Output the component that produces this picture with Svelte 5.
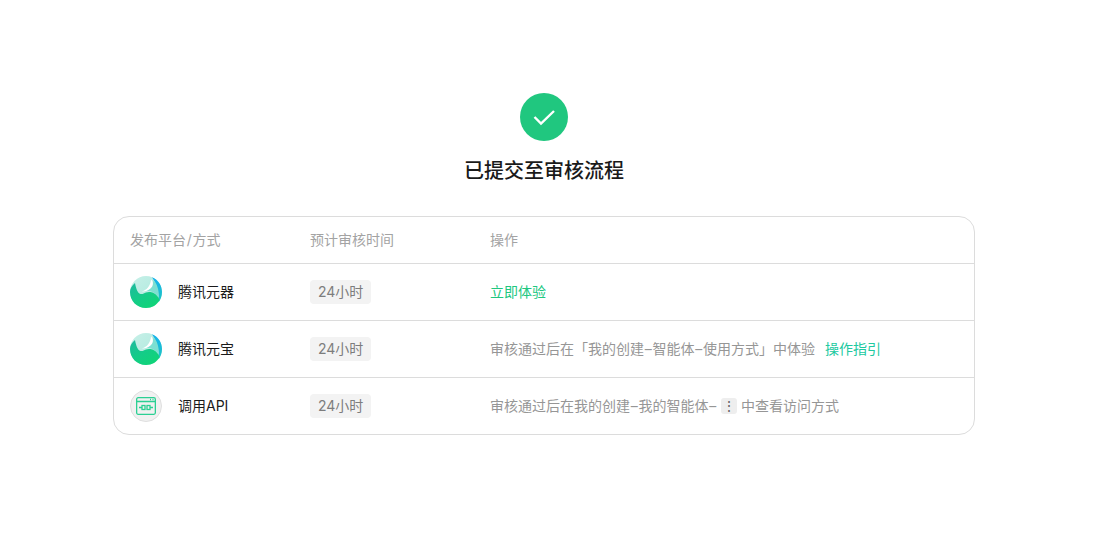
<script>
    const rows = [
        { icon: "yuan", name: "腾讯元器" },
        { icon: "yuan", name: "腾讯元宝" },
        { icon: "api", name: "调用API" }
    ]
</script>

{#snippet yuanIcon(id)}
    <svg class="logo" viewBox="0 0 32 32">
        <defs>
            <linearGradient id="bg{id}" x1="0" y1="0" x2="1" y2="1">
                <stop offset="0" stop-color="#c8f0e8" />
                <stop offset="1" stop-color="#a8e8dc" />
            </linearGradient>
            <linearGradient id="gr{id}" x1="0" y1="0" x2="0.7" y2="1">
                <stop offset="0" stop-color="#1fb8a0" />
                <stop offset="0.55" stop-color="#14cc88" />
                <stop offset="1" stop-color="#10d478" />
            </linearGradient>
            <linearGradient id="bl{id}" x1="0" y1="0" x2="0" y2="1">
                <stop offset="0" stop-color="#16b2f0" />
                <stop offset="1" stop-color="#1fc6c0" />
            </linearGradient>
        </defs>
        <circle cx="16" cy="16" r="16" fill="url(#bg{id})" />
        <path d="M22 1.200C28 3.500 32 9.500 32 16c0 4-1.500 8-3.500 10.500C29 17 27 8 22 1.200z" fill="url(#bl{id})" />
        <path d="M12 15.500C18 15 23 10 23.500 4c3.500 4 5.500 9 5.500 18-3-5-9-9-17-6.500z" fill="#7ddfd2" />
        <path d="M5 7C1.500 10 0 13 0 16c0 9 7 16 16 16 6 0 11-3 13.500-8-1-3-3-5.500-6-7-2-1-5-1.500-7.500-.5-2 .8-3.500 2-5.500 1.500C7.500 17.500 6 12 5 7z" fill="url(#gr{id})" />
        <path d="M12 15.500C17 14 20.500 9.500 21 3.500c2.800 2.500 2.500 6.500-.5 9-2.500 2-5.500 3.300-8.500 3z" fill="#fff" />
    </svg>
{/snippet}

{#snippet apiIcon()}
    <div class="logo api">
        <svg viewBox="0 0 20 18" width="20" height="18" fill="none" stroke="#2bd093" stroke-width="1.300">
            <rect x="0.650" y="0.650" width="18.700" height="16.700" rx="1.500" />
            <path d="M1 4.500h18" />
            <path d="M14 2.500h1M16.500 2.500h1" />
            <path d="M3 10.500h3M14 10.500h3" />
            <rect x="6" y="8.500" width="3" height="4" />
            <rect x="11" y="8.500" width="3" height="4" />
        </svg>
    </div>
{/snippet}

<main class="page">
    <div class="check">
        <svg viewBox="0 0 48 48" width="48" height="48">
            <path d="M14.500 24l6.500 6.500 13-12.500" fill="none" stroke="#fff" stroke-width="2.400" />
        </svg>
    </div>
    <h1>已提交至审核流程</h1>

    <div class="table">
        <div class="row head">
            <div class="col">发布平台<span class="wide">/</span>方式</div>
            <div class="col">预计审核时间</div>
            <div class="col">操作</div>
        </div>
        {#each rows as row, i}
            <div class="row">
                <div class="col platform">
                    {#if row.icon === "yuan"}
                        {@render yuanIcon(i)}
                    {:else}
                        {@render apiIcon()}
                    {/if}
                    <span class="name">{row.name}</span>
                </div>
                <div class="col"><span class="tag">24小时</span></div>
                <div class="col action">
                    {#if i === 0}
                        <span class="link">立即体验</span>
                    {:else if i === 1}
                        审核通过后在「我的创建<span class="wide">–</span>智能体<span class="wide">–</span>使用方式」中体验<span class="link guide">操作指引</span>
                    {:else}
                        审核通过后在我的创建<span class="wide">–</span>我的智能体<span class="wide">–</span><span class="more">⋮</span>中查看访问方式
                    {/if}
                </div>
            </div>
        {/each}
    </div>
</main>

<style>
    :global(body) {
        background: #fff;
    }
    .page {
        width: 1088px;
        height: 552px;
        box-sizing: border-box;
        padding-top: 93px;
        display: flex;
        flex-direction: column;
        align-items: center;
        font-family: Inter, "Noto Sans CJK SC", sans-serif;
        font-size: 14px;
    }
    .check {
        width: 48px;
        height: 48px;
        border-radius: 50%;
        background: #20c77f;
    }
    h1 {
        margin: 16px 0 31px;
        font-size: 20px;
        line-height: 28px;
        font-weight: 500;
        color: #1a1a1a;
    }
    .table {
        width: 862px;
        box-sizing: border-box;
        border: 1px solid #dcdcdc;
        border-radius: 16px;
        overflow: hidden;
    }
    .row {
        display: flex;
        align-items: center;
        height: 57px;
        padding-left: 16px;
        border-top: 1px solid #dcdcdc;
        box-sizing: border-box;
    }
    .head {
        height: 46px;
        border-top: none;
        color: #a3a3a3;
    }
    .col {
        width: 180px;
        flex-shrink: 0;
        line-height: 22px;
    }
    .col:last-child {
        width: auto;
    }
    .wide {
        margin: 0 0.75px;
    }
    .platform {
        display: flex;
        align-items: center;
        gap: 16px;
    }
    .logo {
        width: 32px;
        height: 32px;
        flex-shrink: 0;
        display: block;
    }
    .api {
        display: flex;
        align-items: center;
        justify-content: center;
        box-sizing: border-box;
        border: 1px solid #dedede;
        border-radius: 50%;
        background: #f1f1f1;
    }
    .name {
        color: #1a1a1a;
    }
    .tag {
        display: inline-block;
        padding: 0 8px;
        height: 24px;
        line-height: 24px;
        border-radius: 4px;
        background: #f3f3f3;
        color: #7d7d7d;
    }
    .action {
        color: #969696;
    }
    .link {
        color: #20c77f;
    }
    .guide {
        margin-left: 10px;
        color: #20c9a0;
    }
    .more {
        display: inline-block;
        width: 16px;
        height: 16px;
        line-height: 16px;
        margin: 0 4px 0 4px;
        text-align: center;
        border-radius: 3px;
        background: #eeeeee;
        color: #666;
    }
</style>
